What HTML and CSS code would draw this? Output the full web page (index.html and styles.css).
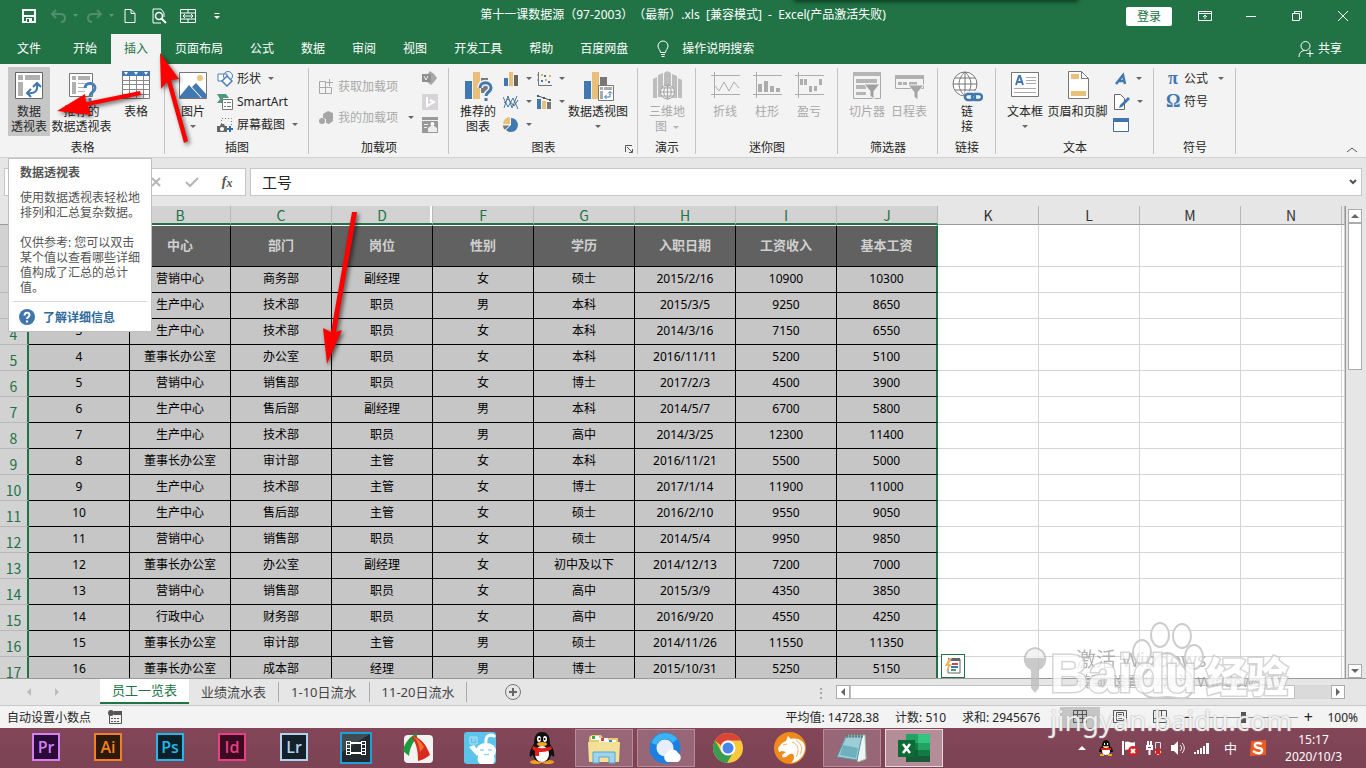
FILE: index.html
```
<!DOCTYPE html>
<html lang="zh-CN">
<head>
    <meta charset="UTF-8">
    <meta name="viewport" content="width=device-width, initial-scale=1.0">
    <title>第十一课数据源（97-2003）（最新）.xls - Excel</title>
    <link rel="stylesheet" href="styles.css">
</head>
<body>

    <!-- Title bar -->
    <header class="titlebar">
        <div class="quick">
            <button aria-label="保存"><svg width="16" height="16" viewBox="0 0 16 16"><path d="M2 2h12v12H2z" fill="none" stroke="#fff" stroke-width="2"/><path d="M2 8h12" stroke="#fff" stroke-width="2"/><path d="M5 10h6v4H5z" fill="#fff"/><path d="M6 11h2v3H6z" fill="#217346"/></svg></button>
            <button class="wide" aria-label="撤消"><svg width="30" height="16" viewBox="0 0 30 16"><path d="M6 2L2 6l4 4M2 6h8c3 0 5 1 5 4s-2 4-4 4" fill="none" stroke="#4f8f6c" stroke-width="2"/><path d="M23 6h5l-2.500 3z" fill="#5f9a78"/></svg></button>
            <button class="wide" aria-label="恢复"><svg width="30" height="16" viewBox="0 0 30 16"><path d="M11 2l4 4-4 4M15 6H7c-3 0-5 1-5 4s2 4 4 4" fill="none" stroke="#4f8f6c" stroke-width="2"/><path d="M23 6h5l-2.500 3z" fill="#5f9a78"/></svg></button>
            <button aria-label="新建"><svg width="16" height="16" viewBox="0 0 16 16"><path d="M3 1.500h6l4 4v9H3zM9 1.500v4h4" fill="none" stroke="#fff"/></svg></button>
            <button aria-label="打印预览"><svg width="16" height="16" viewBox="0 0 16 16"><path d="M13 9V5L10 1H2v14h8" fill="none" stroke="#fff"/><circle cx="8" cy="8" r="3.500" fill="none" stroke="#fff" stroke-width="1.500"/><path d="M10 10l5 5" stroke="#fff" stroke-width="2"/></svg></button>
            <button aria-label="合并居中"><svg width="16" height="16" viewBox="0 0 16 16"><path d="M.5 1.500h15v13H.5zM.5 5h15M.5 11h15M8 1v4M8 11v4M3 8h10M5 6L3 8l2 2M11 6l2 2-2 2" fill="none" stroke="#fff"/></svg></button>
            <button aria-label="自定义快速访问工具栏"><svg width="16" height="16" viewBox="0 0 16 16"><path d="M5.500 5.500h5" stroke="#fff"/><path d="M5 8h6l-3 3z" fill="#fff"/></svg></button>
        </div>
        <h1>第十一课数据源（97-2003）（最新）.xls&nbsp; [兼容模式]&nbsp; -&nbsp; Excel(产品激活失败)</h1>
        <div class="window-controls">
            <button class="login">登录</button>
            <button aria-label="功能区显示选项"><svg width="14" height="14" viewBox="0 0 14 14"><path d="M.5 2.500h13v9H.5zM.5 4.500h13M7 10V6M5 8l2-2 2 2" fill="none" stroke="#fff"/></svg></button>
            <button aria-label="最小化"><svg width="12" height="12" viewBox="0 0 12 12"><path d="M1 6.500h10" stroke="#fff"/></svg></button>
            <button aria-label="还原"><svg width="12" height="12" viewBox="0 0 12 12"><path d="M1.500 3.500h7v7h-7zM3.500 3V1.500h7v7H9" fill="none" stroke="#fff"/></svg></button>
            <button aria-label="关闭"><svg width="12" height="12" viewBox="0 0 12 12"><path d="M1 1l10 10M11 1L1 11" stroke="#fff"/></svg></button>
        </div>
        <div class="top-shadow"></div>
    </header>

    <!-- Ribbon tabs -->
    <nav class="tabs">
        <button class="tab file">文件</button>
        <button class="tab">开始</button>
        <button class="tab active">插入</button>
        <button class="tab">页面布局</button>
        <button class="tab">公式</button>
        <button class="tab">数据</button>
        <button class="tab">审阅</button>
        <button class="tab">视图</button>
        <button class="tab">开发工具</button>
        <button class="tab">帮助</button>
        <button class="tab">百度网盘</button>
        <button class="tab search"><svg width="14" height="18" viewBox="0 0 14 18"><path d="M4.500 12.500C4.500 10 2 9 2 6a5 5 0 0 1 10 0c0 3-2.500 4-2.500 6.500zM5 14.500h4M5.500 16.500h3" fill="none" stroke="#fff"/></svg>操作说明搜索</button>
        <button class="tab share"><svg width="16" height="18" viewBox="0 0 16 18"><circle cx="7.500" cy="6" r="4.500" fill="none" stroke="#fff"/><path d="M1 17c0-4 2-6 5-6.500M12 10v7M8.500 13.500h7" fill="none" stroke="#fff"/></svg>共享</button>
    </nav>

    <!-- Ribbon -->
    <section class="ribbon">
        <div class="group">
            <div class="tools">
                <button class="big pressed"><svg width="32" height="32" viewBox="0 0 32 32"><path d="M2.500 2.500h27v26h-27z" fill="#fff" stroke="#666"/><path d="M5 5h5v5H5zM12 5h15v5H12zM5 12h5v14H5z" fill="#b0b0b0"/><path d="M15 23c8 1 10-3 9-9M20 17l4-4 4 4M18 19l-4 4 4 4" fill="none" stroke="#3f76ad" stroke-width="2"/></svg><span>数据<br>透视表</span></button>
                <button class="big w63"><svg width="32" height="32" viewBox="0 0 32 32"><path d="M3.500 3.500h23v23h-23z" fill="#fff" stroke="#777"/><path d="M6 6h4v4H6zM12 6h12v4H12zM6 12h4v12H6z" fill="#b0b0b0"/><path d="M12 13.500h9M12 17.500h9M12 21.500h7" stroke="#b0b0b0"/><path d="M19 18c0-6 10-6 10 0 0 4-5 4-5 8M24 28v3" fill="none" stroke="#4a7ebb" stroke-width="3"/></svg><span>推荐的<br>数据透视表</span></button>
                <button class="big w46"><svg width="32" height="32" viewBox="0 0 32 32"><path d="M2.500 2.500h27v26h-27z" fill="#fff" stroke="#777"/><path d="M2 1h28v5H2z" fill="#4178b0"/><path d="M4 2h4l-2 3zM14 2h4l-2 3zM24 2h4l-2 3z" fill="#fff"/><path d="M2 10.500h28M2 14.500h28M2 19.500h28M2 24.500h28M9.500 6v23M16.500 6v23M23.500 6v23" stroke="#8a8a8a"/></svg><span>表格</span></button>
            </div>
            <h2>表格</h2>
        </div>
        <div class="group w144">
            <div class="tools">
                <button class="big w40"><svg width="32" height="32" viewBox="0 0 32 32"><path d="M2.500 2.500h27v26h-27z" fill="#fff" stroke="#777"/><circle cx="23" cy="8" r="3" fill="#ebc57a"/><path d="M3 26l9-11 12 13H3z" fill="#4178b0"/><path d="M15 17l4-4 10 11v4h-4z" fill="#4178b0"/></svg><span>图片</span><i class="caret"></i></button>
                <div class="stack pad4">
                    <button class="small"><svg width="16" height="16" viewBox="0 0 16 16"><path d="M1 3h9v7H1z" fill="#fff" stroke="#4a7ebb"/><circle cx="11" cy="5" r="4.500" fill="none" stroke="#4a7ebb"/><path d="M10 5l5 5-5 5-5-5z" fill="#fff" stroke="#4a7ebb" stroke-width="1.500"/></svg>形状<i class="caret"></i></button>
                    <button class="small"><svg width="16" height="16" viewBox="0 0 16 16"><path d="M0 0h9l3 4H6v5H0l3-4z" fill="#4d9a7c"/><path d="M5.500 5.500h10v10h-10z" fill="#fff" stroke="#777"/><path d="M7 8.500h2M10 8.500h4M7 12.500h2M10 12.500h4" stroke="#777"/></svg>SmartArt</button>
                    <button class="small"><svg width="16" height="16" viewBox="0 0 16 16"><path d="M4.500 7V1.500h10V8" fill="none" stroke="#777" stroke-dasharray="1 2"/><path d="M0 9h3l1-2h3l1 2h2v6H0z" fill="#666"/><circle cx="5" cy="12" r="2" fill="#fff"/><path d="M13 9v6M10 12h6" stroke="#2f6fa8" stroke-width="2"/></svg>屏幕截图<i class="caret"></i></button>
                </div>
            </div>
            <h2>插图</h2>
        </div>
        <div class="group w140 grey">
            <div class="tools">
                <div class="stack loose">
                    <button class="small"><svg width="16" height="16" viewBox="0 0 16 16"><path d="M1.500 2.500h6v12h-6zM1 8.500h12.500v6H7M11.500 0v7M8 3.500h7" fill="none" stroke="#a8a8a8"/></svg>获取加载项</button>
                    <button class="small"><svg width="16" height="16" viewBox="0 0 16 16"><path d="M5 4l5-3 5 2v8l-4 3-3-1V9L5 8z" fill="#a6a6a6"/><circle cx="4" cy="11" r="3" fill="#a6a6a6"/></svg>我的加载项<i class="caret dark gap"></i></button>
                </div>
                <div class="stack">
                    <button class="small" aria-label="Visio"><svg width="16" height="16" viewBox="0 0 16 16"><path d="M8 0l4 3 3 4-3 4-3 3-4-3V4z" fill="#a8a8a8"/><path d="M0 3h9v8H0z" fill="#8f8f8f"/><path d="M2 5l2 4 2-4" fill="none" stroke="#eee"/></svg></button>
                    <button class="small" aria-label="必应地图"><svg width="16" height="16" viewBox="0 0 16 16"><path d="M0 0h16v16H0z" fill="#d6d4d6"/><path d="M5 3v9l7-4-4-2" fill="none" stroke="#fff" stroke-width="2"/></svg></button>
                    <button class="small" aria-label="人员图"><svg width="16" height="16" viewBox="0 0 16 16"><path d="M0 0h16v16H0z" fill="#999"/><path d="M0 3.500h16M2 7.500h4M2 10.500h3" stroke="#eee"/><circle cx="10.500" cy="7" r="2" fill="#fff"/><path d="M6 15v-4l3-2h3l3 2v4z" fill="#eee"/></svg></button>
                </div>
            </div>
            <h2>加载项</h2>
        </div>
        <div class="group w189">
            <div class="tools">
                <button class="big w42"><svg width="32" height="32" viewBox="0 0 32 32"><path d="M3 11h7v18H3z" fill="#4178b0"/><path d="M11 2h7v27h-7z" fill="#e9c07a"/><path d="M19 8h7v15h-7z" fill="#777"/><path d="M18 18c0-7 11-7 11 0 0 4-5 4-5 8M24 28v3" fill="none" stroke="#f3f3f3" stroke-width="6"/><path d="M18 18c0-7 11-7 11 0 0 4-5 4-5 8M24 28v3" fill="none" stroke="#4178b0" stroke-width="3"/></svg><span>推荐的<br>图表</span></button>
                <div class="stack pad4">
                    <button class="small" aria-label="柱形图"><svg width="16" height="16" viewBox="0 0 16 16"><path d="M1 7h4v8H1z" fill="#4178b0"/><path d="M6 1h4v14H6z" fill="#e9c07a"/><path d="M11 4h4v11h-4z" fill="#666"/></svg><i class="caret"></i></button>
                    <button class="small" aria-label="折线图"><svg width="16" height="16" viewBox="0 0 16 16"><path d="M1 14L5 2l4 12 5-12M0 3l5 10 5-9 5 11" fill="none" stroke="#4178b0"/><path d="M1 9l4-4 6 7 4-6" fill="none" stroke="#666"/></svg><i class="caret"></i></button>
                    <button class="small" aria-label="饼图"><svg width="16" height="16" viewBox="0 0 16 16"><path d="M8 8V1a7 7 0 1 1-5 12z" fill="#4178b0"/><path d="M7 7H0a7 7 0 0 1 7-7z" fill="#e9c07a"/><path d="M6.500 8.500H0c0 2 1 4 2 4z" fill="#777"/></svg><i class="caret"></i></button>
                </div>
                <div class="stack pad4">
                    <button class="small" aria-label="散点图"><svg width="16" height="16" viewBox="0 0 16 16"><path d="M2.500 1v13.500H16M1 4h1M1 9h1" fill="none" stroke="#777"/><path d="M5 9h2v2H5zM8 4h2v2H8zM12 10h2v2h-2z" fill="#4178b0"/><path d="M5 3h2v2H5zM9 8h2v2H9zM13 4h2v2h-2z" fill="#e0ac58"/></svg><i class="caret"></i></button>
                    <button class="small" aria-label="组合图"><svg width="16" height="16" viewBox="0 0 16 16"><path d="M1 5h4v10H1z" fill="#4178b0"/><path d="M6 7h4v8H6z" fill="#e9c07a"/><path d="M11 8h4v7h-4z" fill="#777"/><path d="M2 2l6 2 6 2" fill="none" stroke="#555"/><path d="M1 1h2v2H1zM7 3h2v2H7zM13 5h2v2h-2z" fill="#555"/></svg><i class="caret"></i></button>
                </div>
                <button class="big w66"><svg width="32" height="32" viewBox="0 0 32 32"><path d="M2 11h7v18H2z" fill="#4178b0"/><path d="M10 2h7v27h-7z" fill="#e9c07a"/><path d="M18 7h7v9h-7z" fill="#777"/><path d="M16.500 15.500h15v15h-15z" fill="#fff" stroke="#777"/><path d="M18 17h3v3h-3zM22 17h8v3h-8zM18 21h3v8h-3z" fill="#aaa"/><path d="M23 27h5v-5M26 23.500l2-2 2 2M24.500 25l-2 2 2 2" fill="none" stroke="#3f76ad"/></svg><span>数据透视图</span><i class="caret"></i></button>
            </div>
            <h2>图表</h2>
            <button class="launcher" aria-label="图表选项"><svg width="8" height="8" viewBox="0 0 8 8"><path d="M.5 7V.5H7M2 2l5 5M7.500 4v3.500H4" fill="none" stroke="#555"/></svg></button>
        </div>
        <div class="group w58 grey">
            <div class="tools">
                <button class="big w42"><svg width="32" height="32" viewBox="0 0 32 32"><path d="M2 9l4-2v21H2zM7 5l5-2v24H7zM13 3l3-2 4 2v20h-7zM21 4l5 2v22h-5zM27 8l4 2v18h-4z" fill="#bdbdbd"/><circle cx="16.500" cy="22" r="7" fill="#f3f3f3" stroke="#a5a5a5"/><path d="M10 22h13M11 18h11M11 26h11M16.500 15v14M16.500 15c-5 4-5 10 0 14M16.500 15c5 4 5 10 0 14" fill="none" stroke="#a5a5a5"/></svg><span>三维地<br>图<i class="caret"></i></span></button>
            </div>
            <h2>演示</h2>
        </div>
        <div class="group w142 grey">
            <div class="tools">
                <button class="big w42"><svg width="32" height="32" viewBox="0 0 32 32"><path d="M5.500 2v26M2 5.500h29M2 24.500h29M6 16l4 5 5-9 5 9 5-9 5 6" fill="none" stroke="#adadad"/></svg><span>折线</span></button>
                <button class="big w42"><svg width="32" height="32" viewBox="0 0 32 32"><path d="M5.500 2v26M2 5.500h29M2 24.500h29" fill="none" stroke="#adadad"/><path d="M7 14h4v8H7zM13 11h4v11h-4zM19 16h4v6h-4zM25 18h4v4h-4z" fill="#adadad"/></svg><span>柱形</span></button>
                <button class="big w42"><svg width="32" height="32" viewBox="0 0 32 32"><path d="M5.500 2v26M2 5.500h29M2 24.500h29" fill="none" stroke="#adadad"/><path d="M7 9h3v6H7zM11 9h3v6h-3zM16 16h3v6h-3zM21 16h3v5h-3zM26 9h3v6h-3z" fill="#adadad"/></svg><span>盈亏</span></button>
            </div>
            <h2>迷你图</h2>
        </div>
        <div class="group w100 grey">
            <div class="tools">
                <button class="big w42"><svg width="32" height="32" viewBox="0 0 32 32"><path d="M2.500 2.500h27v26h-27z" fill="none" stroke="#aaa"/><path d="M2 2h28v4H2zM5 9h21v4H5zM5 15h10v4H5zM5 22h10v3H5z" fill="#b5b5b5"/><path d="M13 14h16l-6 7v8l-4-3v-5z" fill="#9f9f9f" stroke="#f3f3f3"/></svg><span>切片器</span></button>
                <button class="big w42"><svg width="32" height="32" viewBox="0 0 32 32"><path d="M2.500 5.500h28v13h-28z" fill="none" stroke="#aaa"/><path d="M2 5h29v4H2zM5 12h4v3H5zM10 12h4v3h-4zM16 12h8v3h-8z" fill="#b0b0b0"/><path d="M15 15h16l-6 7v8l-4-3v-5z" fill="#a5a5a5" stroke="#f3f3f3"/></svg><span>日程表</span></button>
            </div>
            <h2>筛选器</h2>
        </div>
        <div class="group w58">
            <div class="tools">
                <button class="big w42"><svg width="32" height="32" viewBox="0 0 32 32"><circle cx="14" cy="14" r="12" fill="#fff" stroke="#777"/><path d="M2 14h24M4 8h20M4 20h20M14 2v24M14 2c-8 7-8 17 0 24M14 2c8 7 8 17 0 24" fill="none" stroke="#777"/><path d="M14 21h12v11H14z" fill="#f3f3f3"/><rect x="14" y="24" width="10" height="6" rx="3" fill="none" stroke="#4178b0" stroke-width="2.500"/><rect x="21" y="24" width="10" height="6" rx="3" fill="none" stroke="#4178b0" stroke-width="2.500"/></svg><span>链<br>接</span></button>
            </div>
            <h2>链接</h2>
        </div>
        <div class="group w158">
            <div class="tools">
                <button class="big w42"><svg width="32" height="32" viewBox="0 0 32 32"><path d="M2.500 2.500h27v24h-27z" fill="#fff" stroke="#777"/><path d="M7 15l3-9h1l3 9M8 12h5" fill="none" stroke="#4178b0" stroke-width="2"/><path d="M17 7.500h10M17 10.500h10M17 13.500h10M5 18.500h22M5 22.500h22" stroke="#aaa"/></svg><span>文本框</span><i class="caret"></i></button>
                <button class="big w63"><svg width="32" height="32" viewBox="0 0 32 32"><path d="M6.500 1.500h13l7 7v20h-20z" fill="#fff" stroke="#777"/><path d="M19.500 1.500v7h7" fill="none" stroke="#777"/><path d="M9 4h8v5H9zM9 21h15v5H9z" fill="#e9c07a"/></svg><span>页眉和页脚</span></button>
                <div class="stack pad4">
                    <button class="small" aria-label="艺术字"><svg width="16" height="16" viewBox="0 0 16 16"><path d="M3 13L10 4l2 9M6 10h6" fill="none" stroke="#4178b0" stroke-width="2.500"/></svg><i class="caret"></i></button>
                    <button class="small" aria-label="签名行"><svg width="17" height="16" viewBox="0 0 17 16"><path d="M1.500.5h6l4 4v11h-10z" fill="#fff" stroke="#666"/><path d="M15 3l-8 8-1 3 3-1 8-8z" fill="#4178b0"/></svg><i class="caret"></i></button>
                    <button class="small" aria-label="对象"><svg width="16" height="16" viewBox="0 0 16 16"><path d="M.5 1.500h15v13H.5z" fill="#fff" stroke="#3f6f9c"/><path d="M0 1h16v4H0z" fill="#3f76ad"/></svg></button>
                </div>
            </div>
            <h2>文本</h2>
        </div>
        <div class="group w82">
            <div class="tools">
                <div class="stack pad4">
                    <button class="small"><b class="symbol">π</b>公式<i class="caret gap"></i></button>
                    <button class="small"><b class="symbol">Ω</b>符号</button>
                </div>
            </div>
            <h2>符号</h2>
        </div>
        <button class="collapse" aria-label="折叠功能区"><svg width="12" height="8" viewBox="0 0 12 8"><path d="M1 6l5-4 5 4" fill="none" stroke="#555"/></svg></button>
    </section>

    <!-- Formula bar -->
    <section class="formula">
        <div class="formula-left">
            <input class="name-box" aria-label="名称框">
            <button aria-label="取消"><svg width="12" height="12" viewBox="0 0 12 12"><path d="M2 2l8 8M10 2l-8 8" stroke="#b5b5b5" stroke-width="2"/></svg></button>
            <button aria-label="输入"><svg width="14" height="12" viewBox="0 0 14 12"><path d="M1 6l4 4 8-8" fill="none" stroke="#b5b5b5" stroke-width="2"/></svg></button>
            <button class="fx" aria-label="插入函数">f<sub>x</sub></button>
        </div>
        <div class="formula-right">
            <input aria-label="编辑栏" value="工号">
            <button aria-label="展开编辑栏"><svg width="8" height="8" viewBox="0 0 8 8"><path d="M1 2l3 3 3-3" fill="none" stroke="#555" stroke-width="2"/></svg></button>
        </div>
    </section>

    <!-- Worksheet -->
    <main class="sheet">
        <div class="grid">
            <table>
                <colgroup><col class="c-head"><col class="c" span="13"><col></colgroup>
                <thead>
                    <tr><th></th><th>A</th><th>B</th><th>C</th><th class="hidden-next">D</th><th>F</th><th>G</th><th>H</th><th>I</th><th>J</th><th>K</th><th>L</th><th>M</th><th>N</th><th></th></tr>
                </thead>
                <tbody>
                    <tr class="title-row"><th>1</th><td>工号</td><td>中心</td><td>部门</td><td>岗位</td><td>性别</td><td>学历</td><td>入职日期</td><td>工资收入</td><td>基本工资</td><td></td><td></td><td></td><td></td><td></td></tr>
                    <tr><th>2</th><td>1</td><td>营销中心</td><td>商务部</td><td>副经理</td><td>女</td><td>硕士</td><td>2015/2/16</td><td>10900</td><td>10300</td><td></td><td></td><td></td><td></td><td></td></tr>
                    <tr><th>3</th><td>2</td><td>生产中心</td><td>技术部</td><td>职员</td><td>男</td><td>本科</td><td>2015/3/5</td><td>9250</td><td>8650</td><td></td><td></td><td></td><td></td><td></td></tr>
                    <tr><th>4</th><td>3</td><td>生产中心</td><td>技术部</td><td>职员</td><td>女</td><td>本科</td><td>2014/3/16</td><td>7150</td><td>6550</td><td></td><td></td><td></td><td></td><td></td></tr>
                    <tr><th>5</th><td>4</td><td>董事长办公室</td><td>办公室</td><td>职员</td><td>女</td><td>本科</td><td>2016/11/11</td><td>5200</td><td>5100</td><td></td><td></td><td></td><td></td><td></td></tr>
                    <tr><th>6</th><td>5</td><td>营销中心</td><td>销售部</td><td>职员</td><td>女</td><td>博士</td><td>2017/2/3</td><td>4500</td><td>3900</td><td></td><td></td><td></td><td></td><td></td></tr>
                    <tr><th>7</th><td>6</td><td>生产中心</td><td>售后部</td><td>副经理</td><td>男</td><td>本科</td><td>2014/5/7</td><td>6700</td><td>5800</td><td></td><td></td><td></td><td></td><td></td></tr>
                    <tr><th>8</th><td>7</td><td>生产中心</td><td>技术部</td><td>职员</td><td>男</td><td>高中</td><td>2014/3/25</td><td>12300</td><td>11400</td><td></td><td></td><td></td><td></td><td></td></tr>
                    <tr><th>9</th><td>8</td><td>董事长办公室</td><td>审计部</td><td>主管</td><td>女</td><td>本科</td><td>2016/11/21</td><td>5500</td><td>5000</td><td></td><td></td><td></td><td></td><td></td></tr>
                    <tr><th>10</th><td>9</td><td>生产中心</td><td>技术部</td><td>主管</td><td>女</td><td>博士</td><td>2017/1/14</td><td>11900</td><td>11000</td><td></td><td></td><td></td><td></td><td></td></tr>
                    <tr><th>11</th><td>10</td><td>生产中心</td><td>售后部</td><td>主管</td><td>女</td><td>硕士</td><td>2016/2/10</td><td>9550</td><td>9050</td><td></td><td></td><td></td><td></td><td></td></tr>
                    <tr><th>12</th><td>11</td><td>营销中心</td><td>销售部</td><td>职员</td><td>女</td><td>硕士</td><td>2014/5/4</td><td>9950</td><td>9850</td><td></td><td></td><td></td><td></td><td></td></tr>
                    <tr><th>13</th><td>12</td><td>董事长办公室</td><td>办公室</td><td>副经理</td><td>女</td><td>初中及以下</td><td>2014/12/13</td><td>7200</td><td>7000</td><td></td><td></td><td></td><td></td><td></td></tr>
                    <tr><th>14</th><td>13</td><td>营销中心</td><td>销售部</td><td>职员</td><td>女</td><td>高中</td><td>2015/3/9</td><td>4350</td><td>3850</td><td></td><td></td><td></td><td></td><td></td></tr>
                    <tr><th>15</th><td>14</td><td>行政中心</td><td>财务部</td><td>职员</td><td>女</td><td>高中</td><td>2016/9/20</td><td>4550</td><td>4250</td><td></td><td></td><td></td><td></td><td></td></tr>
                    <tr><th>16</th><td>15</td><td>董事长办公室</td><td>审计部</td><td>主管</td><td>男</td><td>硕士</td><td>2014/11/26</td><td>11550</td><td>11350</td><td></td><td></td><td></td><td></td><td></td></tr>
                    <tr><th>17</th><td>16</td><td>董事长办公室</td><td>成本部</td><td>经理</td><td>男</td><td>博士</td><td>2015/10/31</td><td>5250</td><td>5150</td><td></td><td></td><td></td><td></td><td></td></tr>
                </tbody>
            </table>
            <button class="quick-analysis" aria-label="快速分析"><svg width="18" height="18" viewBox="0 0 18 18"><path d="M5 2h11v14H4v-5" fill="none" stroke="#666"/><path d="M4 1h12v3H4z" fill="#666"/><path d="M5 1L1 9h3l-2 6 6-8H5l3-6z" fill="#e9b56a"/><path d="M8 7h6" stroke="#c0504d" stroke-width="2"/><path d="M7 10h7" stroke="#4178b0" stroke-width="2"/><path d="M7 13h5" stroke="#4d9a7c" stroke-width="2"/></svg></button>
        </div>
        <div class="vscroll">
            <button aria-label="向上滚动"><i class="up"></i></button>
            <div class="thumb"></div>
            <button class="last" aria-label="向下滚动"><i class="down"></i></button>
        </div>
    </main>

    <!-- Sheet tabs -->
    <section class="sheet-bar">
        <div class="sheet-nav"><i class="left"></i><i class="right"></i></div>
        <button class="sheet-tab current">员工一览表</button>
        <button class="sheet-tab">业绩流水表</button>
        <button class="sheet-tab">1-10日流水</button>
        <button class="sheet-tab">11-20日流水</button>
        <button class="add" aria-label="新工作表"><svg width="16" height="16" viewBox="0 0 16 16"><circle cx="8" cy="8" r="7.500" fill="none" stroke="#777"/><path d="M8 4v8M4 8h8" stroke="#666" stroke-width="2"/></svg></button>
        <span class="dots">⋮</span>
        <div class="hscroll">
            <button aria-label="向左滚动"><i class="left"></i></button>
            <div class="thumb"></div>
            <button class="last" aria-label="向右滚动"><i class="right"></i></button>
        </div>
    </section>

    <!-- Status bar -->
    <footer class="status">
        <span>自动设置小数点</span>
        <svg class="macro" width="14" height="14" viewBox="0 0 14 14"><path d="M1.500 5v8.500h12v-11H7" fill="none" stroke="#555"/><path d="M6 1h8v4H6z" fill="#555"/><circle cx="3" cy="3" r="3" fill="#555"/><path d="M3 8.500h9M3 11.500h9" stroke="#555" stroke-dasharray="2 1"/></svg>
        <div class="stats"><span>平均值: 14728.38</span><span>计数: 510</span><span>求和: 2945676</span></div>
        <div class="views">
            <button class="on" aria-label="普通"><svg width="14" height="14" viewBox="0 0 14 14"><path d="M.5.500h13v12H.5zM.5 4.500h13M.5 8.500h13M4.500.5v12M9.500.5v12" fill="none" stroke="#555"/></svg></button>
            <button aria-label="页面布局"><svg width="14" height="14" viewBox="0 0 14 14"><path d="M.5.500h13v12H.5zM3.500 2.500h7v8h-7zM5 4.500h4M5 6.500h4M5 8.500h4" fill="none" stroke="#555"/></svg></button>
            <button aria-label="分页预览"><svg width="14" height="14" viewBox="0 0 14 14"><path d="M.5.500h13v12H.5zM.5 8.500h5v-8M13 8.500H8.500v-8" fill="none" stroke="#555"/></svg></button>
        </div>
        <div class="zoom">
            <button aria-label="缩小">−</button>
            <input type="range" min="10" max="190" value="90" aria-label="显示比例">
            <button aria-label="放大">+</button>
            <span>100%</span>
        </div>
    </footer>

    <!-- Windows taskbar -->
    <footer class="taskbar">
        <div class="apps">
            <button class="adobe pr">Pr</button>
            <button class="adobe ai">Ai</button>
            <button class="adobe ps">Ps</button>
            <button class="adobe id">Id</button>
            <button class="adobe lr">Lr</button>
            <button aria-label="视频"><svg width="32" height="32" viewBox="0 0 32 32"><path d="M1 1h30v30H1z" fill="#222a30" stroke="#1f9fd6" stroke-width="2"/><path d="M2 2h28L2 20z" fill="#414b52"/><path d="M6.500 9v14M10.500 9v14M21.500 9v14M25.500 9v14M6 9.500h5M6 12.500h5M6 16.500h5M6 19.500h5M6 22.500h5M21 9.500h5M21 12.500h5M21 16.500h5M21 19.500h5M21 22.500h5" stroke="#fff"/><path d="M11 11h10M11 21h10" stroke="#fff" stroke-width="2"/></svg></button>
            <button aria-label="FastStone"><svg width="32" height="32" viewBox="0 0 32 32"><rect x="2" y="3" width="29" height="28" rx="4" fill="#f2f2f2"/><path d="M15 1C7 5 2 12 1 19l6 5c1-9 4-14 8-18z" fill="#1f9a3a"/><path d="M12 4c8 3 13 10 16 19-4 3-7 5-12 6 0-9-1-17-6-23z" fill="#d92b20"/><path d="M11 5c4 2 6 8 7 15l4-5c-3-5-6-9-11-10z" fill="#f0702e"/></svg></button>
            <button aria-label="助手"><svg width="32" height="32" viewBox="0 0 32 32"><rect width="32" height="32" rx="3" fill="#5cc3ea"/><path d="M22 11c-1-9 6-9 9-6" fill="none" stroke="#fff" stroke-width="3"/><ellipse cx="22" cy="19" rx="10" ry="8" fill="#fff"/><path d="M14 24c-1 4 0 6 2 8h13c2-3 2-5 1-8zM5 15l5-2 5 7-2 4z" fill="#fff"/><path d="M6 5h7v7H6zM8 7h4M8 9h3" fill="none" stroke="#b5e4f7"/><path d="M16 18h4M24 18h4M20 22c2 1 3 1 5 0" fill="none" stroke="#5cc3ea"/></svg></button>
            <button aria-label="QQ"><svg width="32" height="32" viewBox="0 0 32 32"><ellipse cx="10" cy="30" rx="6" ry="2" fill="#f0a020"/><ellipse cx="22" cy="30" rx="6" ry="2" fill="#f0a020"/><path d="M8 12C8 3 11 0 16 0s8 3 8 12c3 4 5 8 4 13l-3-2c-1 5-4 7-9 7s-8-2-9-7l-3 2c-1-5 1-9 4-13z" fill="#111"/><ellipse cx="16" cy="22" rx="7" ry="8" fill="#fff"/><ellipse cx="13" cy="7" rx="2" ry="3" fill="#fff"/><ellipse cx="19" cy="7" rx="2" ry="3" fill="#fff"/><circle cx="13.500" cy="7" r="1"/><circle cx="18.500" cy="7" r="1"/><ellipse cx="16" cy="12" rx="5" ry="2" fill="#f5a623"/><path d="M7 14c6 3 12 3 18 0l1 3c-5 3-9 3-13 3v4H9v-5l-3-2z" fill="#e3211c"/></svg></button>
            <button class="open" aria-label="资源管理器"><svg width="34" height="32" viewBox="0 0 34 32"><path d="M2 5l3-2h9l2 3h15v23H2z" fill="#e8cb6f"/><path d="M4 4h8v4H4z" fill="#fff"/><path d="M5 4h3v3H5z" fill="#3aa84a"/><path d="M12 6h9v4h-9z" fill="#fff"/><path d="M14 6h3v3h-3z" fill="#d44"/><path d="M20 8h9v3h-9z" fill="#fff"/><path d="M22 8h3v2h-3z" fill="#38c"/><path d="M1 10h32l-1 20H2z" fill="#f3e197"/><path d="M6 31V20h22v11h-6v-6H12v6z" fill="#9fd4ee" stroke="#58a5cf"/></svg></button>
            <button class="open" aria-label="QQ浏览器"><svg width="34" height="32" viewBox="0 0 34 32"><circle cx="16" cy="16" r="12" fill="#e7eef8" stroke="#1d7fe0" stroke-width="7"/><path d="M5 12a12 12 0 0 1 21-3" fill="none" stroke="#39b4f4" stroke-width="6"/><path d="M18 30a5 5 0 0 1 0-9 6 6 0 0 1 11 0 5 5 0 0 1 0 9z" fill="#fff"/></svg></button>
            <button aria-label="Chrome"><svg width="32" height="32" viewBox="0 0 32 32"><circle cx="16" cy="16" r="15" fill="#f8c93a"/><path d="M3 8.500a15 15 0 0 1 26 0H16a7.500 7.500 0 0 0-7 5z" fill="#db4437"/><path d="M3 8.500a15 15 0 0 0 12 22.500l6.500-11a7.500 7.500 0 0 1-12 0z" fill="#3a9c53"/><circle cx="16" cy="16" r="6.500" fill="#4a86ea" stroke="#fff" stroke-width="2"/></svg></button>
            <button aria-label="猎豹"><svg width="32" height="32" viewBox="0 0 32 32"><circle cx="16" cy="16" r="16" fill="#f08a1c"/><path d="M4 16l4-5 4-2 2-5 3 3c8-2 14 3 14 9 0 7-6 14-14 15 3-3 4-6 2-9-2-1-4 0-7 3-3 1-4 0-4-2l4-3-4-1-3 1z" fill="#fff"/><path d="M18 10c6 2 8 8 4 15M22 8c6 4 7 9 4 14M9 13l4-1" fill="none" stroke="#f3b06a"/></svg></button>
            <button class="open" aria-label="记事本"><svg width="34" height="32" viewBox="0 0 34 32"><path d="M12 3h18l1 24-8 3z" fill="#eef4f5" stroke="#9ba"/><path d="M11 4h16l-5 24-20-3z" fill="#9cced8" stroke="#5b929f"/><path d="M8 13l15 3-2 10-16-3z" fill="#6fb0bd"/><path d="M12 2v4M15 2v4M18 2v4M21 2v4M24 2v4M27 2v4" stroke="#555"/></svg></button>
            <button class="open front" aria-label="Excel"><svg width="32" height="32" viewBox="0 0 32 32"><path d="M8 2h12v28H8z" fill="#21a366"/><path d="M20 2h12v9H20z" fill="#33c481"/><path d="M20 11h12v7H20z" fill="#21a366"/><path d="M8 11h12v7H8z" fill="#107c41"/><path d="M8 18h24v12H8z" fill="#185c37"/><path d="M20 18h12v6H20z" fill="#107c41"/><path d="M0 8h17v17H0z" fill="#0d6b38"/><path d="M5 12l7 9M12 12l-7 9" stroke="#fff" stroke-width="2.500"/></svg></button>
        </div>
        <div class="tray">
            <i class="up white"></i>
            <svg width="16" height="16" viewBox="0 0 16 16"><path d="M4 6c0-8 8-8 8 0 3 3 3 5 3 6h-2c-2 4-8 4-10 0H1c0-1 0-3 3-6z" fill="#111"/><ellipse cx="8" cy="11" rx="4" ry="4" fill="#fff"/><path d="M6 3h1v2H6zM9 3h1v2H9z" fill="#fff"/><path d="M5 6h6v1H5zM2 14h4v2H2zM10 14h4v2h-4z" fill="#f5a623"/><path d="M3 8h10v2H3z" fill="#e3211c"/></svg>
            <svg width="16" height="16" viewBox="0 0 16 16"><path d="M1 1v14" stroke="#fff" stroke-width="2"/><path d="M3 2c4-2 5 2 10 0v8c-5 2-6-2-10 0z" fill="#fff"/><circle cx="11" cy="11" r="5" fill="#d9201c"/><path d="M9 9l4 4M13 9l-4 4" stroke="#fff" stroke-width="2"/></svg>
            <svg width="16" height="16" viewBox="0 0 16 16"><path d="M2 1v4M5 1v4M0 6h7M1 6v3h5V6M3.500 9v6" fill="none" stroke="#fff" stroke-width="2"/><path d="M9.500 2.500h5v12h-5z" fill="none" stroke="#ddd"/><path d="M9 9l6 6M15 9l-6 6" stroke="#d9201c" stroke-width="2"/></svg>
            <svg width="16" height="16" viewBox="0 0 16 16"><path d="M1 5h3l4-4v14l-4-4H1z" fill="#fff"/><path d="M10 5c2 2 2 4 0 6M12 3c3 3 3 7 0 10" fill="none" stroke="#fff"/></svg>
            <svg class="signal" width="16" height="16" viewBox="0 0 16 16"><path d="M0 12h2v2H0zM3 10h2v4H3zM6 8h2v6H6zM9 6h2v8H9zM12 3h3v11h-3z" fill="#fff"/></svg>
            <span class="ime">中</span>
            <svg width="18" height="18" viewBox="0 0 18 18"><path d="M2 2l15-1v15L1 17z" fill="#ee5a1f"/><path d="M13 5C9 3 5 4 6 7s8 1 7 5-6 2-9 0" fill="none" stroke="#fff" stroke-width="2.500"/></svg>
            <time>15:17<br>2020/10/3</time>
        </div>
    </footer>

    <!-- Tooltip under the PivotTable button -->
    <aside class="tooltip">
        <h3>数据透视表</h3>
        <p>使用数据透视表轻松地排列和汇总复杂数据。</p>
        <p>仅供参考: 您可以双击某个值以查看哪些详细值构成了汇总的总计值。</p>
        <a href="#"><svg width="16" height="16" viewBox="0 0 16 16"><circle cx="8" cy="8" r="8" fill="#3f76ad"/><path d="M5.500 6.500c0-4 5-3.500 5-.5 0 2-2.500 2-2.500 4M8 11.500v2" fill="none" stroke="#fff" stroke-width="2"/></svg>了解详细信息</a>
    </aside>

    <!-- Activation notice and site watermark -->
    <div class="activate">
        <svg width="26" height="52" viewBox="0 0 26 52"><path d="M13 1a12 12 0 0 0-4 23v18l4 5 4-5V24a12 12 0 0 0-4-23z" fill="#bdbdbd"/><path d="M4 12h18a9 9 0 0 0-18 0z" fill="#f2f2f2"/></svg>
        <div><strong>激活 Windows</strong><span>转到"设置"以激活 Windows。</span></div>
    </div>
    <div class="watermark">
        <svg width="72" height="80" viewBox="0 0 72 80"><g fill="#fff" fill-opacity=".6" stroke="#ccc" stroke-width="2"><ellipse cx="10" cy="31" rx="9" ry="12"/><ellipse cx="28" cy="14" rx="9" ry="12"/><ellipse cx="50" cy="15" rx="9" ry="12"/><ellipse cx="62" cy="36" rx="9" ry="12"/><path d="M35 32c10 0 13 12 22 20 8 9 4 23-4 25-8 1-10-1-18-1s-10 2-18 0c-9-3-12-15-5-23 9-8 12-21 23-21z"/></g></svg>
        <div class="brand">Baidu<b>经验</b></div>
        <div class="site">jingyan.baidu.com</div>
    </div>

    <!-- Red pointers -->
    <svg class="arrows" width="380" height="380" viewBox="0 0 380 380">
        <path d="M160 53L179 79L171 80L188 141L184 143L167 82L161 89z"/>
        <path d="M57 111L85 94L86 102L140 91L141 95L88 106L91 115z"/>
        <path d="M327 364L323 328L331 332L352 212L357 212L336 332L342 330z"/>
    </svg>

</body>
</html>
```
FILE: styles.css
```
* {
    box-sizing: border-box;
}

body {
    margin: 0;
    height: 100vh;
    display: flex;
    flex-direction: column;
    overflow: hidden;
    position: relative;
    font-family: "Noto Sans", "Noto Sans CJK SC", sans-serif;
    font-size: 12px;
    line-height: 15px;
    text-spacing-trim: space-all;
    color: #262626;
    background-color: #e6e6e6;
}

button, input {
    font: inherit;
    color: inherit;
    background: none;
    border: none;
    padding: 0;
    margin: 0;
}

svg {
    display: block;
    flex: none;
}

h1, h2, h3, p {
    margin: 0;
    font-size: 12px;
    font-weight: normal;
}

/* small triangles used on menus and scroll bars */
.caret, .up, .down, .left, .right {
    display: inline-block;
    width: 0;
    height: 0;
    border: 4px solid transparent;
}

.caret {
    border-width: 3px 3px 0;
    border-top-color: #666;
    margin-left: 6px;
}

.up { border-top-width: 0; border-bottom-color: #666; }
.down { border-bottom-width: 0; border-top-color: #666; }
.left { border-left-width: 0; border-right-color: #666; }
.right { border-right-width: 0; border-left-color: #666; }

/* Title bar */
.titlebar {
    height: 34px;
    flex: none;
    display: flex;
    align-items: flex-start;
    position: relative;
    background-color: #217346;
    color: #fff;
}

.quick, .window-controls {
    flex: 1;
    display: flex;
    align-items: center;
    height: 32px;
    padding-left: 21px;
}

.quick {
    gap: 13px;
}

.quick .wide {
    margin-right: -7px;
}

.titlebar h1 {
    line-height: 30px;
    white-space: nowrap;
}

.window-controls {
    justify-content: flex-end;
}

.window-controls button {
    width: 46px;
    height: 30px;
    display: flex;
    align-items: center;
    justify-content: center;
}

.window-controls .login {
    height: 19px;
    margin-right: 10px;
    background-color: #fff;
    color: #217346;
    border-radius: 2px;
}

.top-shadow {
    position: absolute;
    top: -4px;
    left: 796px;
    width: 280px;
    height: 4px;
    box-shadow: 0 0 4px 2px #0c3a20;
}

/* Ribbon tabs */
.tabs {
    height: 30px;
    flex: none;
    display: flex;
    gap: 1px;
    padding: 0 11px 0 4px;
    background-color: #217346;
    color: #fff;
}

.tab {
    padding: 0 13px;
    line-height: 28px;
}

.tab.file {
    margin-right: 5px;
}

.tab.active {
    background-color: #f3f3f3;
    color: #217346;
}

.tab.search, .tab.share {
    display: flex;
    align-items: center;
    gap: 12px;
}

.tab.search {
    padding-left: 14px;
}

.tab.share {
    margin-left: auto;
    gap: 4px;
}

/* Ribbon */
.ribbon {
    height: 94px;
    flex: none;
    display: flex;
    position: relative;
    background-color: #f3f3f3;
    border-bottom: 1px solid #d2d2d2;
}

.group {
    width: 165px;
    padding: 3px 0 1px 8px;
    display: flex;
    flex-direction: column;
    position: relative;
}

.group::after {
    content: "";
    position: absolute;
    top: 4px;
    bottom: 3px;
    right: 0;
    border-right: 1px solid #c4c4c4;
}

.group h2 {
    margin-top: auto;
    padding-right: 8px;
    line-height: 16px;
    text-align: center;
}

.tools {
    display: flex;
    height: 70px;
}

.grey .tools {
    color: #a9a9a9;
}

.big {
    width: 42px;
    height: 69px;
    padding-top: 3px;
    display: flex;
    flex-direction: column;
    align-items: center;
    white-space: nowrap;
}

.big svg {
    margin-bottom: 2px;
}

.big > .caret {
    margin: 6px 0 0;
}

.big span .caret {
    margin: 0 0 2px 6px;
}

.grey .caret {
    border-top-color: #b5b5b5;
}

.grey .caret.dark {
    border-top-color: #666;
}

.pressed {
    background-color: #c6c6c6;
}

.stack {
    display: flex;
    flex-direction: column;
}

.stack.pad4 {
    padding-left: 4px;
}

.small {
    height: 23px;
    display: flex;
    align-items: center;
    gap: 4px;
    white-space: nowrap;
}

.small .caret {
    margin-left: 3px;
}

.small .caret.gap {
    margin: 0 8px 0 6px;
}

.loose {
    padding: 8px 0 0 1px;
    gap: 8px;
}

.symbol {
    width: 14px;
    font-family: "Liberation Serif", serif;
    font-size: 18px;
    color: #4178b0;
}

.launcher {
    position: absolute;
    right: 5px;
    bottom: 4px;
}

.collapse {
    margin: auto 8px 3px auto;
}

.w40 { width: 40px; }
.w42 { width: 42px; }
.w46 { width: 46px; }
.w58 { width: 58px; }
.w63 { width: 63px; }
.w66 { width: 66px; }
.w82 { width: 82px; }
.w100 { width: 100px; }
.w140 { width: 140px; }
.w142 { width: 142px; }
.w144 { width: 144px; }
.w158 { width: 158px; }
.w189 { width: 189px; }

/* Formula bar */
.formula {
    height: 48px;
    flex: none;
    display: flex;
    gap: 4px;
    padding: 10px 4px;
}

.formula-left, .formula-right {
    display: flex;
    align-items: center;
    background-color: #fff;
    border: 1px solid #c6c6c6;
}

.formula-left {
    width: 242px;
}

.formula-left button {
    width: 36px;
    display: flex;
    justify-content: center;
}

.name-box {
    width: 133px;
}

.formula .fx {
    display: block;
    font: italic bold 14px "Liberation Serif", serif;
    color: #555;
}

.fx sub {
    font-size: 12px;
    vertical-align: -1px;
}

.formula-right {
    flex: 1;
    padding: 0 4px 0 11px;
}

.formula-right input {
    flex: 1;
    font-size: 15px;
    line-height: 20px;
}

/* Worksheet */
.sheet {
    flex: 1;
    min-height: 0;
    display: flex;
}

.grid {
    flex: 1;
    overflow: hidden;
    position: relative;
    border-right: 1px solid #999;
}

table {
    width: 100%;
    table-layout: fixed;
    border-collapse: separate;
    border-spacing: 0;
    background-color: #fff;
}

.c-head { width: 29px; }
.c { width: 101px; }

th, td {
    height: 26px;
    padding: 0 0 2px;
    text-align: center;
    white-space: nowrap;
    overflow: hidden;
    border-right: 1px solid #d4d4d4;
    border-bottom: 1px solid #d4d4d4;
}

th {
    font-family: "Noto Sans CJK SC", sans-serif;
    font-size: 14px;
    font-weight: normal;
    color: #333;
    background-color: #e6e6e6;
}

thead th {
    height: 19px;
    padding: 0;
    line-height: 16px;
    border-color: #b8b8b8;
    border-bottom-color: #999;
}

thead th:not(:first-child):nth-child(-n+10) {
    background-color: #d2d2d2;
    color: #217346;
    border-bottom: 2px solid #217346;
}

thead .hidden-next {
    box-shadow: inset -2px 0 #fff;
}

tbody th {
    color: #217346;
    background-color: #d2d2d2;
    border-right: 2px solid #217346;
    border-bottom-color: #b8b8b8;
    vertical-align: bottom;
    line-height: 16px;
}

td:nth-child(-n+10) {
    background-color: #c6c6c6;
    color: #000;
    border-color: #000;
}

td:nth-child(10) {
    border-right: 2px solid #217346;
}

.title-row td, .title-row th {
    height: 42px;
}

.title-row td:nth-child(-n+10) {
    background-color: #616161;
    color: #d0d0d0;
    font-size: 13px;
    font-weight: bold;
    border-top: 1px solid #fff;
}

.quick-analysis {
    position: absolute;
    left: 941px;
    bottom: 0;
    padding: 2px;
    background-color: #fff;
    border: 1px solid #217346;
}

/* Scroll bars */
.vscroll {
    width: 20px;
    padding: 3px 4px 0 2px;
    display: flex;
    flex-direction: column;
}

.vscroll button, .hscroll button {
    width: 14px;
    height: 14px;
    flex: none;
    display: flex;
    align-items: center;
    justify-content: center;
    background-color: #fff;
    border: 1px solid #ababab;
}

.vscroll .thumb {
    height: 147px;
    background-color: #fff;
    border: 1px solid #ababab;
}

.vscroll .last {
    margin-top: auto;
}

.hscroll {
    width: 509px;
    display: flex;
    background-color: #dadada;
}

.hscroll .thumb {
    width: 445px;
    background-color: #fff;
    border: 1px solid #c0c0c0;
}

.hscroll .last {
    margin-left: auto;
}

/* Sheet tabs */
.sheet-bar {
    height: 28px;
    flex: none;
    display: flex;
    align-items: center;
    padding-right: 21px;
    border-top: 1px solid #999;
    border-bottom: 1px solid #c6c6c6;
    color: #444;
}

.sheet-nav {
    width: 100px;
    display: flex;
    gap: 24px;
    padding-left: 27px;
}

.sheet-nav .left { border-right-color: #bbb; }
.sheet-nav .right { border-left-color: #bbb; }

.sheet-tab {
    height: 20px;
    padding: 0 12px;
    font-size: 13px;
    line-height: 18px;
    border-right: 1px solid #ababab;
}

.sheet-tab.current {
    height: 25px;
    align-self: flex-start;
    line-height: 23px;
    background-color: #fff;
    color: #217346;
    border: none;
    border-bottom: 2px solid #217346;
}

.add {
    margin-left: 38px;
}

.dots {
    margin: 0 11px 0 auto;
    width: 10px;
    color: #888;
    text-align: center;
}

/* Status bar */
.status {
    height: 22px;
    flex: none;
    display: flex;
    align-items: center;
    padding: 0 8px 0 7px;
    background-color: #f3f3f3;
}

.macro {
    margin-left: 17px;
}

.stats {
    display: flex;
    gap: 16px;
    margin: 0 20px 0 auto;
}

.views {
    display: flex;
}

.views button {
    width: 40px;
    height: 21px;
    display: flex;
    align-items: center;
    justify-content: center;
}

.views .on {
    background-color: #c6c6c6;
}

.zoom {
    display: flex;
    align-items: center;
    gap: 4px;
    padding-left: 2px;
}

.zoom button {
    width: 12px;
    font-size: 16px;
}

.zoom input {
    width: 100px;
    height: 16px;
    appearance: none;
    background: linear-gradient(#999, #999) center / 100% 1px no-repeat;
}

.zoom input::-webkit-slider-thumb {
    appearance: none;
    width: 5px;
    height: 11px;
    background-color: #555;
}

.zoom span {
    margin-left: 9px;
}

/* Taskbar */
.taskbar {
    height: 40px;
    flex: none;
    display: flex;
    justify-content: space-between;
    background: linear-gradient(#834659, #7b4354);
    color: #fff;
}

.apps {
    display: flex;
    gap: 4px;
    padding: 1px 0 1px 17px;
}

.apps button {
    width: 58px;
    display: flex;
    align-items: center;
    justify-content: center;
}

.apps .open {
    background-color: #986777;
    border: 1px solid #b58c99;
}

.apps .front {
    background-color: #b58d99;
    border-color: #e8d8dd;
}

.apps .adobe {
    width: 28px;
    height: 28px;
    margin: 4px 15px 0;
    border: 2px solid;
    font-family: "Open Sans", sans-serif;
    font-size: 16px;
    font-weight: 600;
    line-height: 20px;
}

.pr { color: #d480f0; background-color: #2a0a38; }
.ai { color: #f08020; background-color: #2d1a0c; }
.ps { color: #20b8ea; background-color: #0b2029; }
.id { color: #ea3f86; background-color: #3a0a20; }
.lr { color: #b0d2ea; background-color: #14212b; }

.tray {
    display: flex;
    align-items: center;
    gap: 8px;
    padding-right: 24px;
}

.tray .white {
    border-bottom-color: #fff;
    margin-right: 4px;
}

.tray .signal {
    margin-right: 6px;
}

.ime {
    font-size: 13px;
    margin-right: 4px;
}

.tray time {
    margin-left: 10px;
    font-size: 12px;
    line-height: 17px;
    text-align: center;
}

/* Tooltip */
.tooltip {
    position: absolute;
    top: 158px;
    left: 8px;
    width: 144px;
    padding: 6px 4px 4px;
    background-color: #fff;
    border: 1px solid #c0c0c0;
    color: #555;
}

.tooltip h3 {
    padding: 0 7px;
    font-weight: bold;
}

.tooltip p {
    padding: 10px 4px 0 7px;
}

.tooltip p + p {
    padding-top: 15px;
}

.tooltip a {
    display: flex;
    align-items: center;
    gap: 8px;
    margin-top: 6px;
    padding: 7px 6px 2px;
    border-top: 1px solid #d8d8d8;
    color: #2f6a9c;
    font-weight: bold;
    text-decoration: none;
}

/* Watermarks */
.activate {
    position: absolute;
    right: 60px;
    bottom: 70px;
    width: 284px;
    display: flex;
    gap: 28px;
    color: #a0a0a0;
    opacity: 0.8;
}

.activate strong, .activate span {
    display: block;
    white-space: nowrap;
}

.activate strong {
    font-size: 20px;
    font-weight: normal;
    line-height: 28px;
}

.activate span {
    font-size: 15px;
}

.watermark {
    position: absolute;
    right: 74px;
    bottom: 31px;
    width: 242px;
}

.watermark svg {
    position: absolute;
    left: 82px;
    top: -28px;
}

.brand {
    font: bold 53px/50px "Liberation Sans", "Noto Sans CJK SC", sans-serif;
    white-space: nowrap;
    color: #fff;
    -webkit-text-stroke: 3px #c8c8c8;
    paint-order: stroke fill;
    opacity: 0.75;
}

.brand b {
    margin-left: 9px;
    font-size: 41px;
}

.site {
    font-size: 28px;
    line-height: 34px;
    color: rgba(255, 255, 255, 0.85);
    text-shadow: 0 0 2px #999;
}

/* Pointers */
.arrows {
    position: absolute;
    top: 0;
    left: 0;
    pointer-events: none;
    fill: #f00;
    filter: drop-shadow(2px 2px 2px rgba(0, 0, 0, 0.6));
}
```
